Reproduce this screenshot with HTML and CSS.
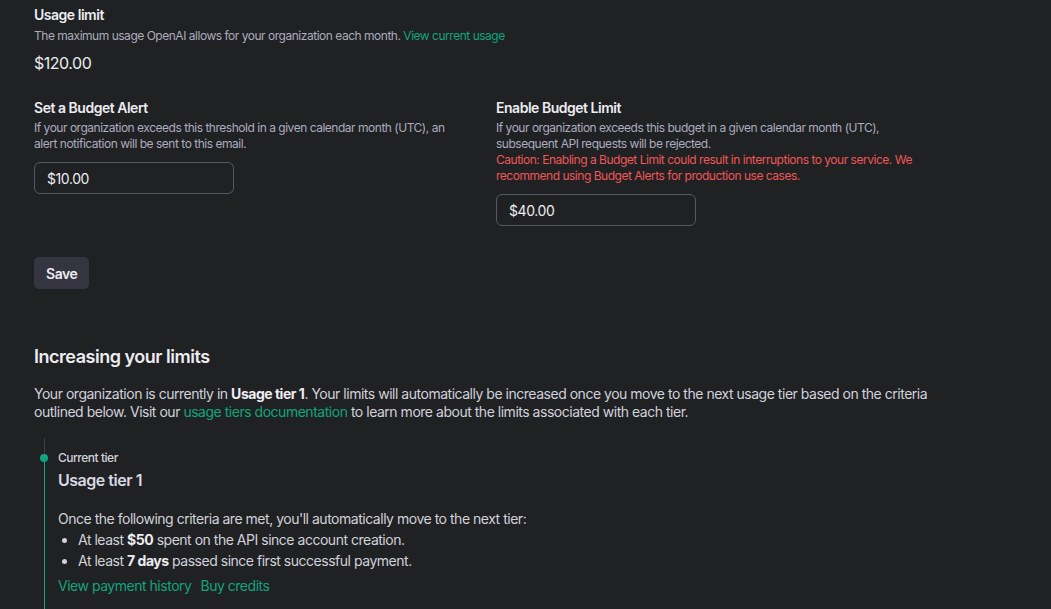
FILE: index.html
```html
<!DOCTYPE html>
<html lang="en">
<head>
<meta charset="utf-8">
<title>Limits</title>
<link rel="stylesheet" href="styles.css">
</head>
<body>
<main class="page">
  <section class="usage">
    <h3 class="label">Usage limit</h3>
    <p class="desc">The maximum usage OpenAI allows for your organization each month. <a class="link" href="#">View current usage</a></p>
    <div class="amount">$120.00</div>
  </section>

  <section class="budget-grid">
    <div class="budget-col">
      <h3 class="label">Set a Budget Alert</h3>
      <p class="desc">If your organization exceeds this threshold in a given calendar month (UTC), an alert notification will be sent to this email.</p>
      <input class="money-input" type="text" value="$10.00">
    </div>
    <div class="budget-col">
      <h3 class="label">Enable Budget Limit</h3>
      <p class="desc">If your organization exceeds this budget in a given calendar month (UTC), subsequent API requests will be rejected.</p>
      <p class="desc caution">Caution: Enabling a Budget Limit could result in interruptions to your service. We recommend using Budget Alerts for production use cases.</p>
      <input class="money-input" type="text" value="$40.00">
    </div>
  </section>

  <div class="actions">
    <button class="btn-save" type="button">Save</button>
  </div>

  <section class="increase">
    <h2 class="section-title">Increasing your limits</h2>
    <p class="body-text">Your organization is currently in <strong>Usage tier 1</strong>. Your limits will automatically be increased once you move to the next usage tier based on the criteria outlined below. Visit our <a class="link" href="#">usage tiers documentation</a> to learn more about the limits associated with each tier.</p>

    <div class="timeline">
      <div class="rail">
        <span class="rail-top"></span>
        <span class="rail-dot"></span>
        <span class="rail-bottom"></span>
      </div>
      <div class="tier">
        <div class="tier-kicker">Current tier</div>
        <div class="tier-name">Usage tier 1</div>
        <p class="tier-text">Once the following criteria are met, you'll automatically move to the next tier:</p>
        <ul class="criteria">
          <li>At least <strong>$50</strong> spent on the API since account creation.</li>
          <li>At least <strong>7 days</strong> passed since first successful payment.</li>
        </ul>
        <div class="tier-links">
          <a class="link" href="#">View payment history</a>
          <a class="link" href="#">Buy credits</a>
        </div>
      </div>
    </div>
  </section>
</main>
</body>
</html>
```

FILE: styles.css
```css
html, body {
  margin: 0;
  padding: 0;
  background: #202123;
  height: 100%;
  overflow: hidden;
}

body {
  font-family: Inter, "Noto Sans", "Liberation Sans", sans-serif;
  color: #ececf1;
  letter-spacing: -0.03em;
  -webkit-font-smoothing: antialiased;
}

.page {
  padding: 5px 0 0 34px;
  width: 900px;
}

.label {
  margin: 0;
  font-size: 14px;
  line-height: 20px;
  font-weight: 600;
  color: #ececf1;
}

.desc {
  margin: 0;
  font-size: 12px;
  line-height: 16px;
  color: #acacbe;
}

.usage .desc {
  margin-top: 3px;
}

.link {
  color: #12a47c;
  text-decoration: none;
}

.amount {
  margin-top: 7px;
  font-size: 16px;
  line-height: 24px;
  color: #ececf1;
}

.budget-grid {
  margin-top: 23px;
  display: grid;
  grid-template-columns: 430px 430px;
  column-gap: 32px;
  align-items: start;
}

.budget-col {
  display: flex;
  flex-direction: column;
  align-items: flex-start;
}

.budget-col .label + .desc {
  margin-top: 2px;
}

.caution {
  color: #ef5658;
}

.money-input {
  margin-top: 10px;
  box-sizing: border-box;
  width: 200px;
  height: 32px;
  padding: 0 12px;
  border: 1px solid #565869;
  border-radius: 6px;
  background: #202123;
  color: #ececf1;
  font-family: inherit;
  font-size: 14px;
  letter-spacing: -0.03em;
  outline: none;
}

.actions {
  margin-top: 31px;
}

.btn-save {
  box-sizing: border-box;
  height: 32px;
  padding: 0 12px;
  border: none;
  border-radius: 5px;
  background: #343541;
  color: #ececf1;
  font-family: inherit;
  font-size: 14px;
  font-weight: 600;
  letter-spacing: -0.03em;
}

.increase {
  margin-top: 54px;
}

.section-title {
  margin: 0;
  font-size: 18px;
  line-height: 28px;
  font-weight: 600;
  color: #ececf1;
}

.body-text {
  margin: 14px 0 0;
  width: 910px;
  font-size: 14px;
  line-height: 18px;
  color: #d1d1db;
}

.body-text strong {
  font-weight: 700;
  color: #ececf1;
}

.timeline {
  margin-top: 17px;
  display: flex;
  align-items: stretch;
  min-height: 200px;
}

.rail {
  width: 20px;
  flex: 0 0 20px;
  display: flex;
  flex-direction: column;
  align-items: center;
}

.rail-top {
  width: 1px;
  height: 16px;
  background: #3e3f4b;
}

.rail-dot {
  width: 8px;
  height: 8px;
  border-radius: 50%;
  background: #12a47c;
}

.rail-bottom {
  width: 1px;
  flex: 1;
  background: #12a47c;
}

.tier {
  margin-left: 4px;
  padding-top: 12px;
}

.tier-kicker {
  font-size: 12px;
  line-height: 16px;
  font-weight: 500;
  color: #d1d1db;
}

.tier-name {
  margin-top: 2px;
  font-size: 16px;
  line-height: 24px;
  font-weight: 600;
  color: #d9d9e3;
}

.tier-text {
  margin: 17px 0 0;
  font-size: 14px;
  line-height: 20px;
  color: #d1d1db;
}

.criteria {
  margin: 1px 0 0;
  padding-left: 20px;
  font-size: 14px;
  line-height: 20px;
  color: #d1d1db;
}

.criteria li {
  margin-top: 1px;
}

.criteria strong {
  font-weight: 700;
  color: #ececf1;
}

.tier-links {
  margin-top: 5px;
  display: flex;
  gap: 9px;
  font-size: 14px;
  line-height: 20px;
}
```
